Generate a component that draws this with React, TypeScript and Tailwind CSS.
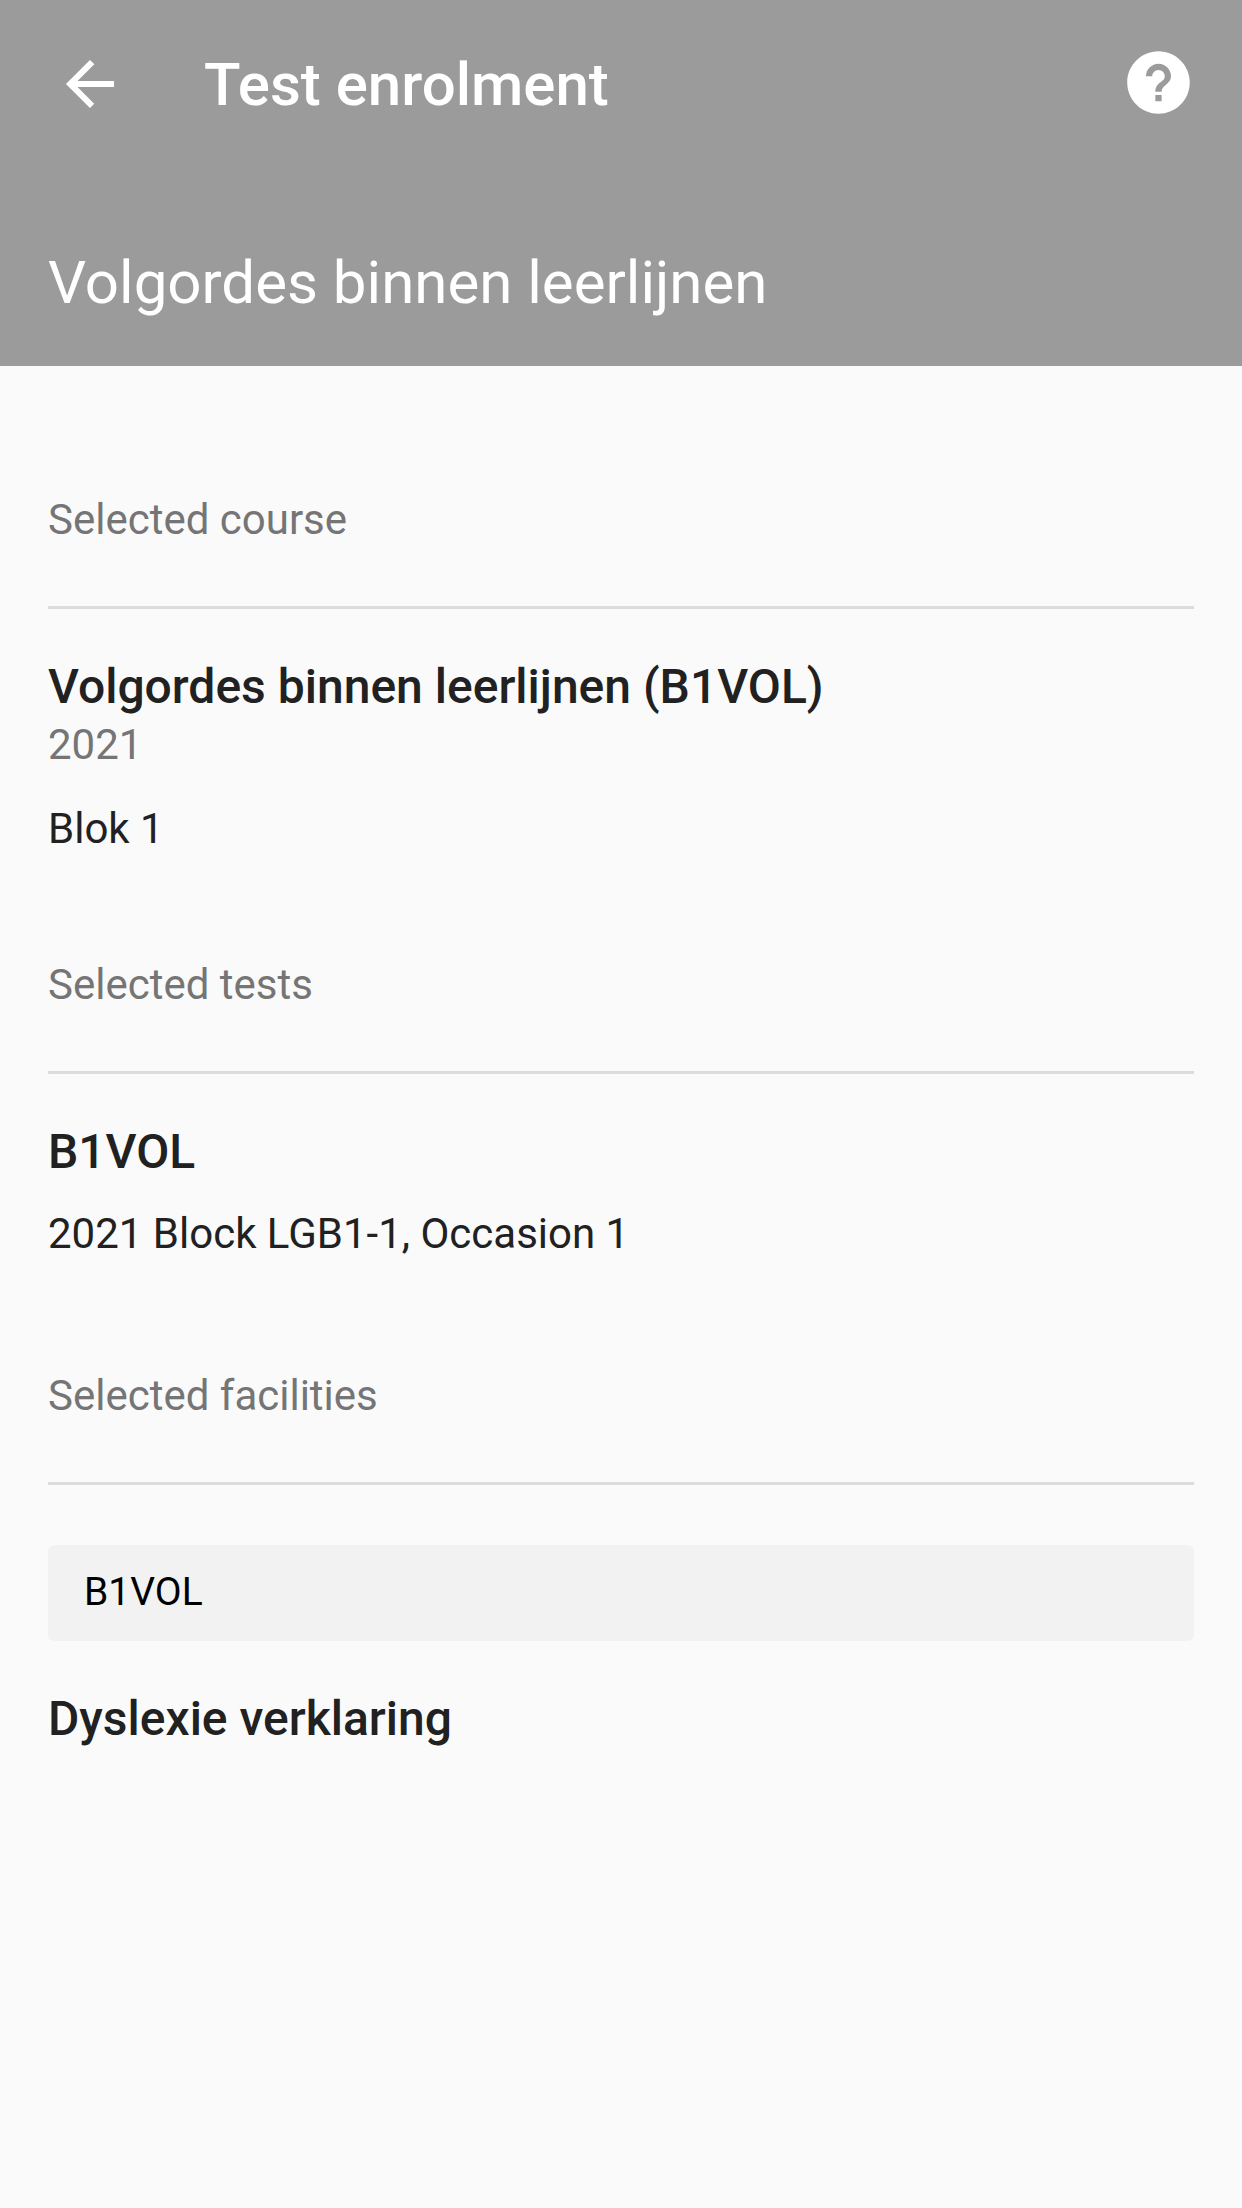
import { IoMdArrowBack, IoMdHelpCircle } from "react-icons/io";

type SectionProps = {
  title: string;
  children: React.ReactNode;
};

function Section({ title, children }: SectionProps): React.ReactElement {
  return (
    <section>
      <h2 className="border-b-3 border-[#dcdcdc] pb-[54px] text-[42px] leading-[64px] text-[#757575]">
        {title}
      </h2>
      {children}
    </section>
  );
}

export default function App(): React.ReactElement {
  return (
    <div className="min-h-screen bg-[#fafafa] font-[Roboto,sans-serif] text-[#212121]">
      <header className="bg-[#9b9b9b] text-white">
        <div className="flex h-[168px] items-center pr-[45px] pl-[54px]">
          <button type="button" aria-label="Back">
            <IoMdArrowBack className="size-[72px]" />
          </button>
          <h1 className="ml-[78px] flex-1 pt-0.5 text-[60px] font-medium">Test enrolment</h1>
          <button type="button" aria-label="Help" className="pb-1">
            <IoMdHelpCircle className="size-[77px]" />
          </button>
        </div>
        <p className="px-12 pt-[78px] pb-[46px] text-[60px] leading-[74px]">
          Volgordes binnen leerlijnen
        </p>
      </header>

      <main className="px-12 pt-[122px]">
        <Section title="Selected course">
          <h3 className="mt-12 text-[48px] leading-[60px] font-medium">
            Volgordes binnen leerlijnen (B1VOL)
          </h3>
          <p className="text-[42px] leading-[56px] text-[#757575]">2021</p>
          <p className="mt-7 mb-24 text-[42px] leading-[56px]">Blok 1</p>
        </Section>

        <Section title="Selected tests">
          <h3 className="mt-12 text-[48px] leading-[60px] font-medium">B1VOL</h3>
          <p className="mt-6 mb-[102px] text-[42px] leading-[56px]">
            2021 Block LGB1-1, Occasion 1
          </p>
        </Section>

        <Section title="Selected facilities">
          <p className="mt-[60px] rounded-md bg-[#f2f2f2] px-9 pt-5 pb-[22px] text-[39px] leading-[54px] text-black">
            B1VOL
          </p>
          <h3 className="mt-12 text-[48px] leading-[60px] font-medium">
            Dyslexie verklaring
          </h3>
        </Section>
      </main>
    </div>
  );
}
